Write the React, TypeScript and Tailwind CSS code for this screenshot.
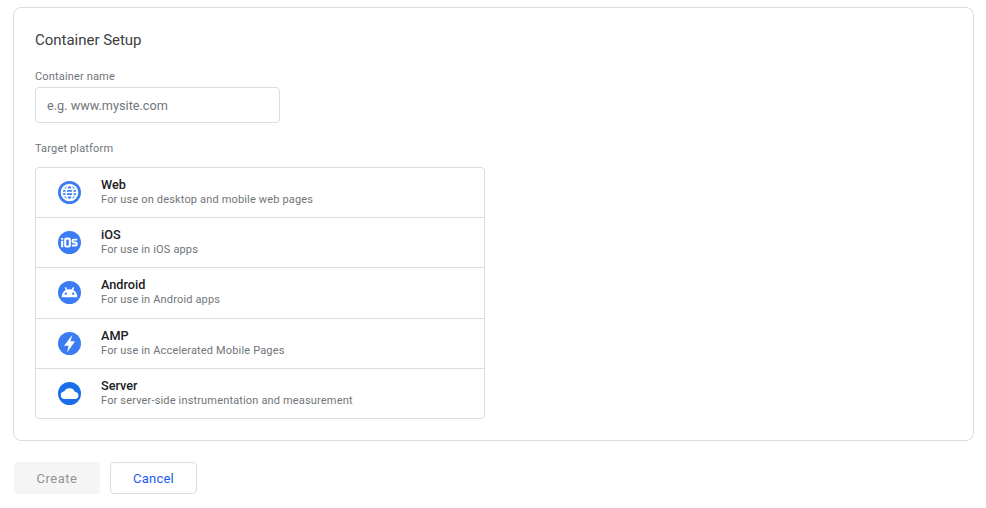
const platforms = [
  { name: "Web", desc: "For use on desktop and mobile web pages", icon: "web" },
  { name: "iOS", desc: "For use in iOS apps", icon: "ios" },
  { name: "Android", desc: "For use in Android apps", icon: "android" },
  { name: "AMP", desc: "For use in Accelerated Mobile Pages", icon: "amp" },
  { name: "Server", desc: "For server-side instrumentation and measurement", icon: "server" },
];

function Icon({ kind }: { kind: string }) {
  if (kind === "web") {
    return (
      <svg width="23" height="23" viewBox="0 0 22 22">
        <circle cx="11" cy="11" r="11" fill="#3b7cf5" />
        <circle cx="11" cy="11" r="7.400" fill="none" stroke="#fff" strokeWidth="2" />
        <ellipse cx="11" cy="11" rx="3.200" ry="7" fill="none" stroke="#fff" strokeWidth="1.500" />
        <path d="M4 11h14M5 7.900h12M5 14.100h12" stroke="#fff" strokeWidth="1.300" fill="none" />
      </svg>
    );
  }
  if (kind === "ios") {
    return (
      <svg width="23" height="23" viewBox="0 0 22 22">
        <circle cx="11" cy="11" r="11" fill="#3b7cf5" />
        <path d="M4 6.700v1.600M4 9.400v6.200" stroke="#fff" strokeWidth="2" fill="none" />
        <rect x="6.900" y="7.300" width="4.400" height="7.600" rx="1" fill="none" stroke="#fff" strokeWidth="2" />
        <path d="M18.400 8.300h-3.200c-.9 0-1.400.5-1.400 1.200v.4c0 .7.500 1.100 1.400 1.100h1.400c.9 0 1.400.5 1.400 1.200v.500c0 .7-.5 1.200-1.400 1.200h-3.300" fill="none" stroke="#fff" strokeWidth="1.800" />
      </svg>
    );
  }
  if (kind === "android") {
    return (
      <svg width="23" height="23" viewBox="0 0 22 22">
        <circle cx="11" cy="11" r="11" fill="#3b7cf5" />
        <path d="M3.500 15.500c.1-4.300 3-7.600 7.500-7.600s7.400 3.300 7.500 7.600z" fill="#fff" />
        <path d="M7 6.200l1.700 3M15 6.200l-1.700 3" stroke="#fff" strokeWidth="1.400" />
        <circle cx="7.500" cy="12.200" r="1.100" fill="#3b7cf5" />
        <circle cx="14.500" cy="12.200" r="1.100" fill="#3b7cf5" />
      </svg>
    );
  }
  if (kind === "amp") {
    return (
      <svg width="23" height="23" viewBox="0 0 22 22">
        <circle cx="11" cy="11" r="11" fill="#3b7cf5" />
        <path d="M13.800 2.600 5.800 13.100h4.300L8.700 19.600l7.600-10.800h-4.400z" fill="#fff" />
      </svg>
    );
  }
  return (
    <svg width="23" height="23" viewBox="0 0 22 22">
      <circle cx="11" cy="11" r="11" fill="#1a6fe8" />
      <path d="M6.500 16.200a3.500 3.500 0 0 1-.6-7 5.600 5.600 0 0 1 10.400.4 3.300 3.300 0 0 1-.2 6.600z" fill="#fff" />
    </svg>
  );
}

export default function App() {
  return (
    <div className="w-[986px] h-[508px] bg-white overflow-hidden font-['Roboto',sans-serif]">
      <div className="ml-[13px] mt-[7px] w-[961px] h-[434px] border border-[#dadce0] rounded-lg pt-[22px] pl-[21px]">
        <h2 className="text-[15px] leading-5 tracking-[-0.02px] text-[#3c4043] font-normal">Container Setup</h2>
        <label className="block mt-[20px] text-[11px] leading-[14px] tracking-[0.16px] text-[#70757a]">Container name</label>
        <div className="mt-[3px] w-[245px] h-9 border border-[#dadce0] rounded flex items-center pl-[11px] pt-[1px] text-[12.700px] text-[#70757a]">
          e.g. www.mysite.com
        </div>
        <label className="block mt-[19px] text-[11px] leading-[14px] tracking-[0.16px] text-[#70757a]">Target platform</label>
        <div className="mt-[11px] w-[450px] border border-[#dadce0] rounded">
          {platforms.map((p, i) => (
            <div
              key={p.name}
              className={`flex items-center pl-[22px] ${i < platforms.length - 1 ? "h-[50.200px] border-b border-[#dadce0]" : "h-[49.500px]"}`}
            >
              <Icon kind={p.icon} />
              <div className="ml-[20px] pb-[1px]">
                <div className="text-[12.700px] leading-[16px] font-medium text-[#202124]">{p.name}</div>
                <div className="text-[11px] leading-[14px] tracking-[0.16px] text-[#70757a]">{p.desc}</div>
              </div>
            </div>
          ))}
        </div>
      </div>
      <div className="flex ml-[14px] mt-[21px] gap-[10px]">
        <div className="w-[86px] h-8 rounded bg-[#f5f5f5] flex items-center justify-center pt-[1px] text-[13px] tracking-[0.5px] text-[#8f9498]">Create</div>
        <div className="w-[87px] h-8 rounded border border-[#dadce0] flex items-center justify-center pt-[1px] text-[13px] tracking-[0.2px] text-[#1a5cf0]">Cancel</div>
      </div>
    </div>
  );
}
